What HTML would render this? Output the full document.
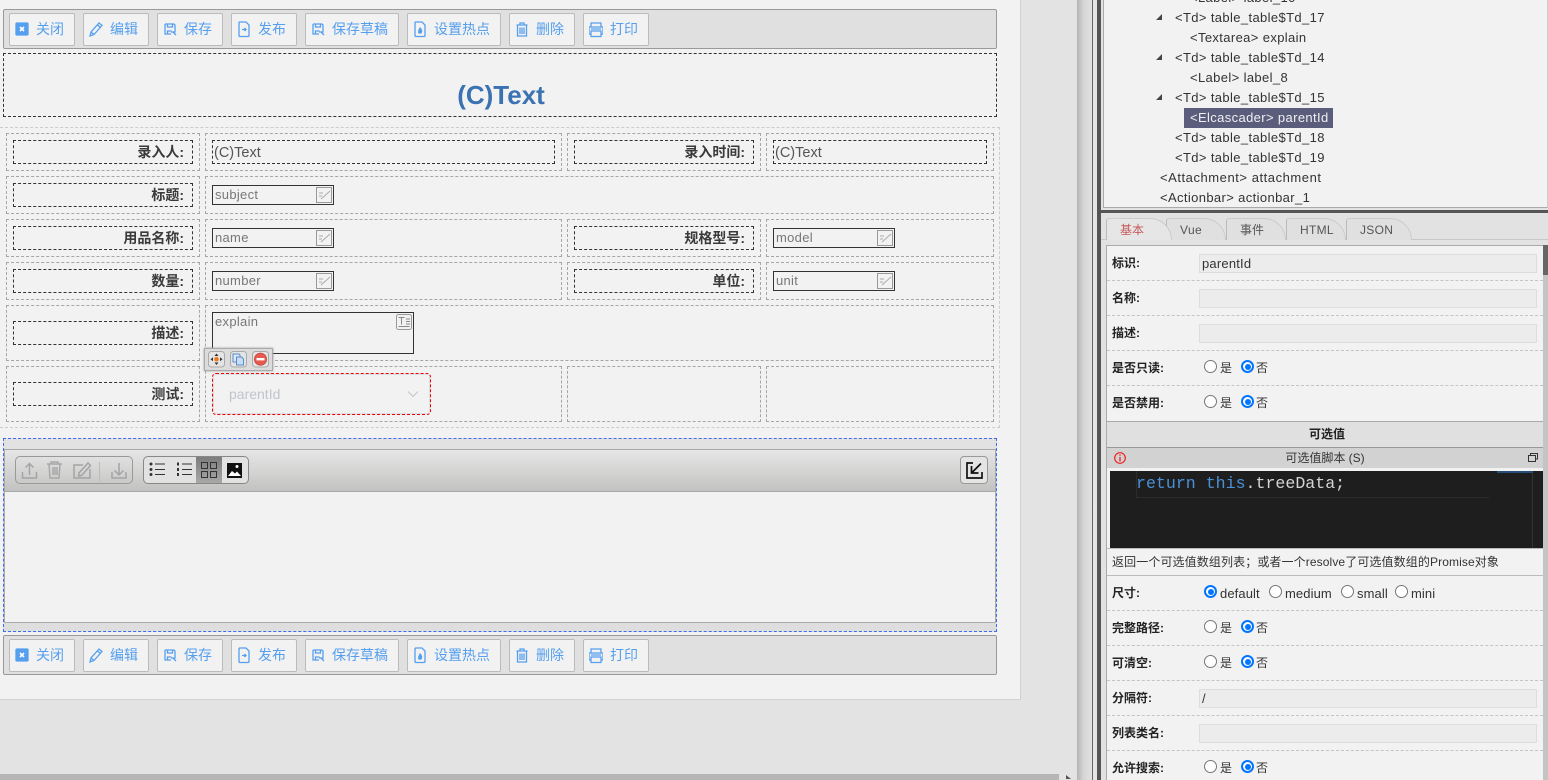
<!DOCTYPE html>
<html lang="zh"><head><meta charset="utf-8"><title>Form</title>
<style>
html,body{margin:0;padding:0;width:1548px;height:780px;overflow:hidden;background:#e3e3e3}
body{position:relative;font-family:"Liberation Sans","Noto Sans CJK SC",sans-serif;font-size:13px;color:#333}
div,span,svg{position:absolute;box-sizing:border-box}
.t{white-space:nowrap;line-height:20px;height:20px}
.tb{left:3px;width:994px;height:40px;background:#e0e0e0;border:1px solid #999;border-radius:2px}
.b{top:3px;height:33px;background:#f2f2f2;border:1px solid #bbb;border-radius:2px}
.b .t{left:26px;top:5px;font-size:14px;color:#559fee}
.b svg{left:5px;top:6px;width:14px;height:18px;fill:none;stroke:#559fee;stroke-width:1.3}
.c{border:1px dashed #a6a6a6}
.l{left:13px;width:180px;height:24px;border:1px dashed #333;text-align:right;padding-right:8px;font-weight:bold;font-size:14px;line-height:22px;color:#3a3a3a;white-space:nowrap}
.v{height:24px;border:1px dashed #333;font-size:14.5px;line-height:24px;color:#555;padding-left:1px;white-space:nowrap}
.i{width:122px;height:20px;border:1px solid #333;font-size:13px;line-height:18px;color:#777;padding-left:2px;letter-spacing:.3px}
.i svg{right:1px;top:1px;width:16px;height:16px}
.tr{font-size:13px;letter-spacing:.37px;color:#333}
.pl{left:1112px;font-size:12px;font-weight:bold;color:#222}
.ds{left:1107px;width:436px;height:1px;border-top:1px dashed #c4c4c4}
.f{left:1199px;width:338px;height:19px;background:#ececec;border:1px solid #ddd;font-size:13px;line-height:18px;padding-left:2px;color:#333;letter-spacing:.2px}
.r{width:13px;height:13px;border:1px solid #767676;border-radius:50%;background:#fff}
.r.on{border:2px solid #0075ff;background:#fff}
.r.on:after{content:"";position:absolute;left:1.5px;top:1.5px;width:6px;height:6px;border-radius:50%;background:#0075ff}
.rt{font-size:12px;color:#333;letter-spacing:.3px}
.rl{font-size:13px;color:#333;letter-spacing:.1px;margin-top:1px}
.tab{top:218px;height:22px;border:1px solid #ccc;border-bottom:0;border-left:1px solid #bbb;border-radius:3px 22px 0 0;background:#e0e0e0}
</style></head><body>
<svg width="0" height="0" style="left:0;top:0"><defs>
<symbol id="ic0" viewBox="0 0 14 18"><rect x="1" y="3" width="12" height="12" rx="1" fill="#559fee" stroke="#559fee"/><path d="M5 7l4 4M9 7l-4 4" stroke="#fff" stroke-width="1.6"/></symbol>
<symbol id="ic1" viewBox="0 0 14 18"><path d="M1 16l1-4 8-9 3 2.500-8 9zM2 12l3 2.500M8.500 5l3 2.500"/></symbol>
<symbol id="ic2" viewBox="0 0 14 18"><path d="M2 4h9l1 1v7H8M2 4v10h6M4.500 4v3h5V4M4.500 14v-3h4M10 12l3 3"/></symbol>
<symbol id="ic3" viewBox="0 0 14 18"><path d="M3 2h6l3 3v10.500q0 1-1 1H3q-1 0-1-1V3q0-1 1-1zM5 9.500h4M7.500 8l1.500 1.500L7.500 11"/></symbol>
<symbol id="ic4" viewBox="0 0 14 18"><path d="M3 2h6l3 3v10.500q0 1-1 1H3q-1 0-1-1V3q0-1 1-1z"/><path d="M7 7q3 3 2 5.500a2.200 2.200 0 0 1-4 0Q5 10 7 7z" fill="#559fee" stroke="none"/></symbol>
<symbol id="ic5" viewBox="0 0 14 18"><path d="M1.500 5h11M5 5V3h4v2M2.500 5v11h9V5M5 7.500v6.500M7 7.500v6.500M9 7.500v6.500"/></symbol>
<symbol id="ic6" viewBox="0 0 14 18"><path d="M3 7V3h10v4M3 14H1V7h14v7h-2M3 11h10v5.500H3zM3 9h10" transform="translate(-1 0)"/></symbol>
<symbol id="nt" viewBox="0 0 16 16"><rect x=".5" y=".5" width="15" height="15" fill="#f2f2f2" stroke="#999"/><path d="M3 6h4M3 9h3M5 12l9-8" stroke="#aaa" fill="none"/></symbol>
</defs></svg>

<!-- form panel -->
<div style="left:0;top:0;width:1021px;height:700px;background:#f2f2f2;border-right:1px solid #d2d2d2;border-bottom:1px solid #d2d2d2"></div>

<!-- top toolbar -->
<div class="tb" style="top:9px">
<div class="b" style="left:5px;width:66px"><svg stroke="none"><use href="#ic0"/></svg><span class="t">关闭</span></div>
<div class="b" style="left:79px;width:66px"><svg><use href="#ic1"/></svg><span class="t">编辑</span></div>
<div class="b" style="left:153px;width:66px"><svg><use href="#ic2"/></svg><span class="t">保存</span></div>
<div class="b" style="left:227px;width:66px"><svg><use href="#ic3"/></svg><span class="t">发布</span></div>
<div class="b" style="left:301px;width:94px"><svg><use href="#ic2"/></svg><span class="t">保存草稿</span></div>
<div class="b" style="left:403px;width:94px"><svg><use href="#ic4"/></svg><span class="t">设置热点</span></div>
<div class="b" style="left:505px;width:66px"><svg><use href="#ic5"/></svg><span class="t">删除</span></div>
<div class="b" style="left:579px;width:66px"><svg><use href="#ic6"/></svg><span class="t">打印</span></div>
</div>

<!-- title -->
<div style="left:3px;top:53px;width:994px;height:64px;border:1px dashed #333"></div>
<div class="t" style="left:3px;top:80px;width:996px;text-align:center;font-size:26px;font-weight:bold;color:#3a72b2;line-height:30px;height:30px">(C)Text</div>

<!-- table -->
<div style="left:0;top:127px;width:1000px;height:301px;border:1px dashed #ccc;border-left:0"></div>
<div class="c" style="left:6px;top:133px;width:194px;height:38px"></div>
<div class="c" style="left:205px;top:133px;width:357px;height:38px"></div>
<div class="c" style="left:567px;top:133px;width:194px;height:38px"></div>
<div class="c" style="left:766px;top:133px;width:228px;height:38px"></div>
<div class="c" style="left:6px;top:176px;width:194px;height:38px"></div>
<div class="c" style="left:205px;top:176px;width:789px;height:38px"></div>
<div class="c" style="left:6px;top:219px;width:194px;height:38px"></div>
<div class="c" style="left:205px;top:219px;width:357px;height:38px"></div>
<div class="c" style="left:567px;top:219px;width:194px;height:38px"></div>
<div class="c" style="left:766px;top:219px;width:228px;height:38px"></div>
<div class="c" style="left:6px;top:262px;width:194px;height:38px"></div>
<div class="c" style="left:205px;top:262px;width:357px;height:38px"></div>
<div class="c" style="left:567px;top:262px;width:194px;height:38px"></div>
<div class="c" style="left:766px;top:262px;width:228px;height:38px"></div>
<div class="c" style="left:6px;top:305px;width:194px;height:56px"></div>
<div class="c" style="left:205px;top:305px;width:789px;height:56px"></div>
<div class="c" style="left:6px;top:366px;width:194px;height:56px"></div>
<div class="c" style="left:205px;top:366px;width:357px;height:56px"></div>
<div class="c" style="left:567px;top:366px;width:194px;height:56px"></div>
<div class="c" style="left:766px;top:366px;width:228px;height:56px"></div>

<div class="l" style="top:140px">录入人:</div>
<div class="v" style="left:212px;top:140px;width:343px">(C)Text</div>
<div class="l" style="left:574px;top:140px">录入时间:</div>
<div class="v" style="left:773px;top:140px;width:214px">(C)Text</div>
<div class="l" style="top:183px">标题:</div>
<div class="i" style="left:212px;top:185px">subject<svg><use href="#nt"/></svg></div>
<div class="l" style="top:226px">用品名称:</div>
<div class="i" style="left:212px;top:228px">name<svg><use href="#nt"/></svg></div>
<div class="l" style="left:574px;top:226px">规格型号:</div>
<div class="i" style="left:773px;top:228px">model<svg><use href="#nt"/></svg></div>
<div class="l" style="top:269px">数量:</div>
<div class="i" style="left:212px;top:271px">number<svg><use href="#nt"/></svg></div>
<div class="l" style="left:574px;top:269px">单位:</div>
<div class="i" style="left:773px;top:271px">unit<svg><use href="#nt"/></svg></div>
<div class="l" style="top:321px">描述:</div>
<div class="i" style="left:212px;top:312px;width:202px;height:42px">explain
<svg style="right:1px;top:1px;width:16px;height:16px" viewBox="0 0 16 16"><rect x=".5" y=".5" width="15" height="15" rx="2" fill="#f2f2f2" stroke="#999"/><path d="M2.500 3.500h6M5.500 3.500v7M10 5h4M10 7.500h4M10 10h4M2.500 12.500h11" stroke="#888" fill="none"/></svg></div>
<div class="l" style="top:382px">测试:</div>

<!-- cascader -->
<div style="left:212px;top:373px;width:219px;height:42px;border:1px dashed #e00;border-radius:4px;box-shadow:inset 0 0 0 1px #dcdfe6"></div>
<div class="t" style="left:229px;top:384px;font-size:14px;color:#c0c4cc">parentId</div>
<svg style="left:407px;top:390px;width:12px;height:8px" viewBox="0 0 12 8"><path d="M1 1.500l5 5 5-5" fill="none" stroke="#c0c4cc"/></svg>

<!-- floating bar -->
<div style="left:204px;top:348px;width:69px;height:23px;background:#dcdcdc;border:1px solid #aaa;box-shadow:0 0 2px #999"></div>
<svg style="left:208px;top:351px;width:62px;height:17px" viewBox="0 0 62 17">
<rect x=".5" y=".5" width="16" height="15.500" rx="3" fill="#e4e4e4" stroke="#aaa"/>
<path d="M8.500 2.500l2 2.500h-4zM8.500 14l2-2.500h-4zM2.500 8.200l2.500-2v4zM14.500 8.200l-2.500-2v4z" fill="#333"/><circle cx="8.500" cy="8.200" r="2.300" fill="#f07818"/>
<rect x="22.500" y=".5" width="16" height="15.500" rx="3" fill="#e4e4e4" stroke="#aaa"/>
<path d="M25 3h6l1 1v7h-7z" fill="#dce8f8" stroke="#5a8cc8"/><path d="M28.500 6h5l2 2v6h-7z" fill="#c8dcf4" stroke="#5a8cc8"/>
<rect x="44.500" y=".5" width="16" height="15.500" rx="3" fill="#e4e4e4" stroke="#aaa"/>
<circle cx="52.500" cy="8.200" r="6" fill="#e85a50" stroke="#c84a42"/><rect x="48.500" y="7" width="8" height="2.400" fill="#fff"/>
</svg>

<!-- attachment -->
<div style="left:3px;top:438px;width:994px;height:194px;background:#e2e2e2;border:1px dashed #3a6df0"></div>
<div style="left:4px;top:449px;width:992px;height:43px;background:linear-gradient(#e6e6e6,#c2c3c1);border:1px solid #a8a8a8"></div>
<div style="left:5px;top:492px;width:990px;height:130px;background:#f2f2f2"></div>
<div style="left:4px;top:622px;width:992px;height:9px;background:#dedede;border-top:1px solid #aaa"></div>
<div style="left:4px;top:492px;width:1px;height:130px;background:#aaa"></div>
<div style="left:995px;top:492px;width:1px;height:130px;background:#aaa"></div>

<div style="left:15px;top:456px;width:118px;height:28px;border:1px solid #999;border-radius:5px"></div>
<svg style="left:15px;top:456px;width:118px;height:28px" viewBox="0 0 118 28" fill="none" stroke="#a4a4a4" stroke-width="1.500">
<path d="M7.500 16v6h14v-6M14.500 19V7.500M10.500 11.500l4-4 4 4"/>
<path d="M32 8h15M36 8V6h7v2M34 8l1 14h9l1-14M38 11v8M40 11v8M42 11v8" stroke="#a8a8a8"/>
<path d="M68 9H59v13h16v-9M64 17l-.5 3 3-.5 9-10-2.500-2.500z" stroke="#a4a4a4"/>
<path d="M84.500 6v20" stroke="#bbb" stroke-width="1"/>
<path d="M97 16v6h14v-6M104 7v12M99.500 14.500l4.500 4.500 4.500-4.500"/></svg>

<div style="left:143px;top:456px;width:106px;height:28px;border:1px solid #888;border-radius:5px;background:#e2e2e2"></div>
<div style="left:196px;top:457px;width:26px;height:26px;background:linear-gradient(#7c7c7c,#a8a8a8)"></div>
<svg style="left:143px;top:456px;width:106px;height:28px" viewBox="0 0 106 28">
<g fill="#333"><circle cx="8" cy="8" r="1.500"/><circle cx="8" cy="13.500" r="1.500"/><circle cx="8" cy="18.500" r="1.500"/><rect x="12" y="7.500" width="10" height="1"/><rect x="12" y="13" width="10" height="1"/><rect x="12" y="18" width="10" height="1"/>
<rect x="34" y="6.500" width="2" height="3"/><rect x="34" y="12" width="2" height="3"/><rect x="34" y="17" width="2" height="3"/><rect x="39" y="7.500" width="10" height="1"/><rect x="39" y="13" width="10" height="1"/><rect x="39" y="18" width="10" height="1"/></g>
<g fill="none" stroke="#333"><rect x="58.500" y="6.500" width="6" height="6"/><rect x="67.500" y="6.500" width="6" height="6"/><rect x="58.500" y="15.500" width="6" height="6"/><rect x="67.500" y="15.500" width="6" height="6"/></g>
<rect x="84" y="7" width="15" height="15" fill="#111"/><path d="M85 20l4-5 3 2.500 2-2 4 4.500z" fill="#fff"/><circle cx="94" cy="10.500" r="1.500" fill="#fff"/></svg>

<div style="left:960px;top:456px;width:28px;height:28px;border:1px solid #999;border-radius:4px;background:#e4e4e4"></div>
<svg style="left:960px;top:456px;width:28px;height:28px" viewBox="0 0 28 28" fill="none" stroke="#111" stroke-width="1.700"><path d="M13 7H7v15h15v-6M21 7.500L12 16.500M11.500 10v7h7"/></svg>

<!-- bottom toolbar -->
<div class="tb" style="top:635px">
<div class="b" style="left:5px;width:66px"><svg stroke="none"><use href="#ic0"/></svg><span class="t">关闭</span></div>
<div class="b" style="left:79px;width:66px"><svg><use href="#ic1"/></svg><span class="t">编辑</span></div>
<div class="b" style="left:153px;width:66px"><svg><use href="#ic2"/></svg><span class="t">保存</span></div>
<div class="b" style="left:227px;width:66px"><svg><use href="#ic3"/></svg><span class="t">发布</span></div>
<div class="b" style="left:301px;width:94px"><svg><use href="#ic2"/></svg><span class="t">保存草稿</span></div>
<div class="b" style="left:403px;width:94px"><svg><use href="#ic4"/></svg><span class="t">设置热点</span></div>
<div class="b" style="left:505px;width:66px"><svg><use href="#ic5"/></svg><span class="t">删除</span></div>
<div class="b" style="left:579px;width:66px"><svg><use href="#ic6"/></svg><span class="t">打印</span></div>
</div>

<!-- bottom scrollbar -->
<div style="left:0;top:774px;width:1059px;height:6px;background:#b6b6b6"></div>
<svg style="left:1066px;top:775px;width:6px;height:5px" viewBox="0 0 6 5"><path d="M0 0l5 4H0z" fill="#555"/></svg>

<!-- splitter -->
<div style="left:1077px;top:0;width:15px;height:780px;background:linear-gradient(90deg,#b4b4b4,#d6d6d6 45%,#e2e2e2)"></div>
<div style="left:1092px;top:0;width:1px;height:780px;background:#666"></div>
<div style="left:1093px;top:0;width:4px;height:780px;background:#e6e6e6"></div>
<div style="left:1097px;top:0;width:4px;height:780px;background:#555"></div>
<div style="left:1101px;top:0;width:447px;height:780px;background:#e2e2e2"></div>

<!-- tree -->
<div style="left:1103px;top:-2px;width:445px;height:210px;background:#f2f2f2;border:1px solid #aaa;border-right:1px solid #ccc"></div>
<div class="t tr" style="left:1190px;top:-12px">&lt;Label&gt; label_10</div>
<div class="t tr" style="left:1175px;top:8px">&lt;Td&gt; table_table$Td_17</div>
<div class="t tr" style="left:1190px;top:28px">&lt;Textarea&gt; explain</div>
<div class="t tr" style="left:1175px;top:48px">&lt;Td&gt; table_table$Td_14</div>
<div class="t tr" style="left:1190px;top:68px">&lt;Label&gt; label_8</div>
<div class="t tr" style="left:1175px;top:88px">&lt;Td&gt; table_table$Td_15</div>
<div style="left:1184px;top:108px;width:149px;height:20px;background:#5a5e7c"></div>
<div class="t tr" style="left:1190px;top:108px;color:#f0f0f0">&lt;Elcascader&gt; parentId</div>
<div class="t tr" style="left:1175px;top:128px">&lt;Td&gt; table_table$Td_18</div>
<div class="t tr" style="left:1175px;top:148px">&lt;Td&gt; table_table$Td_19</div>
<div class="t tr" style="left:1160px;top:168px;letter-spacing:.55px">&lt;Attachment&gt; attachment</div>
<div class="t tr" style="left:1160px;top:188px">&lt;Actionbar&gt; actionbar_1</div>
<svg style="left:1156px;top:0;width:8px;height:105px" viewBox="0 0 8 105" fill="#444"><path d="M6 14v6H0zM6 54v6H0zM6 94v6H0z"/></svg>

<div style="left:1101px;top:210px;width:447px;height:3px;background:#555"></div>

<!-- tabs -->
<div style="left:1101px;top:239px;width:447px;height:1px;background:#c8c8c8"></div>
<div class="tab" style="left:1346px;width:66px"></div>
<div class="tab" style="left:1286px;width:60px"></div>
<div class="tab" style="left:1226px;width:60px"></div>
<div class="tab" style="left:1166px;width:60px"></div>
<div class="tab" style="left:1106px;width:66px;height:22px;background:#e6e6e6"></div>
<div class="t" style="left:1120px;top:220px;font-size:12px;color:#c85a5a">基本</div>
<div class="t" style="left:1180px;top:220px;font-size:12px;color:#555;letter-spacing:.4px">Vue</div>
<div class="t" style="left:1240px;top:220px;font-size:12px;color:#555">事件</div>
<div class="t" style="left:1300px;top:220px;font-size:12px;color:#555;letter-spacing:.3px">HTML</div>
<div class="t" style="left:1360px;top:220px;font-size:12px;color:#555;letter-spacing:.3px">JSON</div>

<!-- props -->
<div style="left:1106px;top:245px;width:442px;height:535px;background:#f2f2f2;border:1px solid #aaa;border-right:0;border-bottom:0"></div>
<div style="left:1543px;top:245px;width:5px;height:535px;background:#c4c4c4"></div>
<div style="left:1543px;top:245px;width:5px;height:30px;background:#666"></div>

<div class="t pl" style="top:253px">标识:</div><div class="f" style="top:254px">parentId</div><div class="ds" style="top:280px"></div>
<div class="t pl" style="top:288px">名称:</div><div class="f" style="top:289px"></div><div class="ds" style="top:315px"></div>
<div class="t pl" style="top:323px">描述:</div><div class="f" style="top:324px"></div><div class="ds" style="top:350px"></div>
<div class="t pl" style="top:358px">是否只读:</div>
<div class="r" style="left:1204px;top:360px"></div><div class="t rt" style="left:1220px;top:358px">是</div>
<div class="r on" style="left:1241px;top:360px"></div><div class="t rt" style="left:1256px;top:358px">否</div>
<div class="ds" style="top:385px"></div>
<div class="t pl" style="top:393px">是否禁用:</div>
<div class="r" style="left:1204px;top:395px"></div><div class="t rt" style="left:1220px;top:393px">是</div>
<div class="r on" style="left:1241px;top:395px"></div><div class="t rt" style="left:1256px;top:393px">否</div>

<div style="left:1107px;top:421px;width:436px;height:27px;background:#e0e0e0;border-top:1px solid #aaa;border-bottom:1px solid #999;text-align:center;font-size:12px;font-weight:bold;line-height:25px;color:#222;padding-left:4px">可选值</div>
<div style="left:1107px;top:448px;width:436px;height:20px;background:#d2d2d2;text-align:center;font-size:12px;line-height:20px;color:#333">可选值脚本 (S)</div>
<svg style="left:1113px;top:451px;width:14px;height:14px" viewBox="0 0 14 14"><circle cx="7" cy="7" r="5.300" fill="none" stroke="#ee2222" stroke-width="1.200"/><path d="M7 3.500v1.300M7 6v4.500" stroke="#ee2222" stroke-width="1.300"/></svg>
<svg style="left:1527px;top:452px;width:12px;height:12px" viewBox="0 0 12 12" fill="none" stroke="#333"><path d="M3.500 3V1.500h7v5.500H9"/><rect x="1.500" y="3.500" width="7" height="6"/></svg>

<div style="left:1110px;top:471px;width:433px;height:77px;background:#1e1e1e"></div>
<div style="left:1136px;top:471px;width:353px;height:27px;border-bottom:1px solid #2c2c2c;border-left:1px solid #2c2c2c"></div>
<div style="left:1532px;top:471px;width:1px;height:77px;background:#333"></div>
<div style="left:1497px;top:471px;width:36px;height:2px;background:#264f78"></div>
<div class="t" style="left:1136px;top:474px;font-family:'Liberation Mono',monospace;font-size:16.6px;color:#d4d4d4"><span style="position:static;color:#4a90d6">return this</span>.treeData;</div>

<div class="t" style="left:1112px;top:552px;font-size:12px;color:#333;letter-spacing:.11px">返回一个可选值数组列表；或者一个resolve了可选值数组的Promise对象</div>
<div style="left:1107px;top:548px;width:436px;height:1px;background:#bbb"></div>
<div style="left:1107px;top:575px;width:436px;height:1px;background:#bbb"></div>

<div class="t pl" style="top:583px">尺寸:</div>
<div class="r on" style="left:1204px;top:585px"></div><div class="t rl" style="left:1220px;top:583px">default</div>
<div class="r" style="left:1269px;top:585px"></div><div class="t rl" style="left:1285px;top:583px">medium</div>
<div class="r" style="left:1341px;top:585px"></div><div class="t rl" style="left:1357px;top:583px">small</div>
<div class="r" style="left:1395px;top:585px"></div><div class="t rl" style="left:1411px;top:583px">mini</div>
<div class="ds" style="top:610px"></div>
<div class="t pl" style="top:618px">完整路径:</div>
<div class="r" style="left:1204px;top:620px"></div><div class="t rt" style="left:1220px;top:618px">是</div>
<div class="r on" style="left:1241px;top:620px"></div><div class="t rt" style="left:1256px;top:618px">否</div>
<div class="ds" style="top:645px"></div>
<div class="t pl" style="top:653px">可清空:</div>
<div class="r" style="left:1204px;top:655px"></div><div class="t rt" style="left:1220px;top:653px">是</div>
<div class="r on" style="left:1241px;top:655px"></div><div class="t rt" style="left:1256px;top:653px">否</div>
<div class="ds" style="top:680px"></div>
<div class="t pl" style="top:688px">分隔符:</div><div class="f" style="top:689px">/</div>
<div class="ds" style="top:715px"></div>
<div class="t pl" style="top:723px">列表类名:</div><div class="f" style="top:724px"></div>
<div class="ds" style="top:750px"></div>
<div class="t pl" style="top:758px">允许搜索:</div>
<div class="r" style="left:1204px;top:760px"></div><div class="t rt" style="left:1220px;top:758px">是</div>
<div class="r on" style="left:1241px;top:760px"></div><div class="t rt" style="left:1256px;top:758px">否</div>
</body></html>
